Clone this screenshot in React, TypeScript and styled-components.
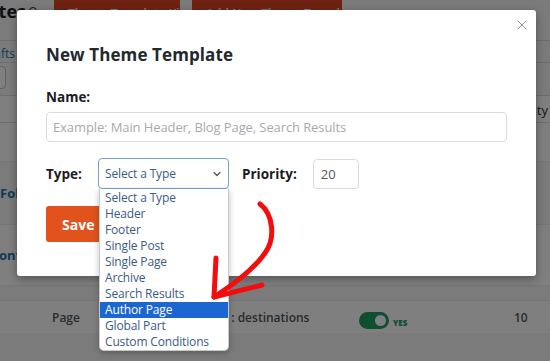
import React from "react";
import styled, { createGlobalStyle } from "styled-components";
import { X } from "lucide-react";

const GlobalStyle = createGlobalStyle`
  html, body { margin: 0; padding: 0; }
  body {
    width: 550px;
    height: 361px;
    overflow: hidden;
    background: #f6f7f7;
    font-family: "Open Sans", "Noto Sans", sans-serif;
  }
  * { box-sizing: border-box; }
`;

/* ---------- background admin page ---------- */

const Page = styled.div`
  position: relative;
  width: 550px;
  height: 361px;
  overflow: hidden;
  background: #f6f7f7;
  color: #1d2327;
`;

const TopBar = styled.div`
  display: flex;
  align-items: flex-start;
  height: 34px;
  margin-top: -12px;
`;

const TitleClip = styled.div`
  width: 26px;
  overflow: hidden;
  display: flex;
  justify-content: flex-end;
  white-space: nowrap;
  font-size: 18px;
  font-weight: 700;
  line-height: 24px;
  margin-top: 11px;
`;

const InfoDot = styled.span`
  width: 8px;
  height: 8px;
  border: 1.5px solid #1d2327;
  border-radius: 50%;
  margin: 19px 0 0 3px;
`;

const HeadButton = styled.div<{ $w: number; $ml: number }>`
  width: ${(p) => p.$w}px;
  margin-left: ${(p) => p.$ml}px;
  height: 34px;
  background: #dd4525;
  color: #fff;
  border-radius: 3px;
  font-size: 12px;
  font-weight: 600;
  display: flex;
  align-items: flex-start;
  padding: 17px 0 0 14px;
  white-space: nowrap;
`;

const FilterRow = styled.div`
  margin-top: 18px;
  height: 23px;
  border-top: 1px solid #dcdcde;
  border-bottom: 1px solid #dcdcde;
  display: flex;
  align-items: center;
  padding-top: 4px;
  font-size: 12px;
  color: #2271b1;
  white-space: nowrap;
`;

const ClipLink = styled.div`
  width: 15px;
  overflow: hidden;
  display: flex;
  justify-content: flex-end;
`;

const BulkRow = styled.div`
  height: 32px;
  display: flex;
  align-items: flex-start;
  padding-top: 3px;
`;

const BulkBox = styled.div`
  width: 40px;
  height: 23px;
  margin-left: -34px;
  border: 1px solid #c3c4c7;
  border-radius: 4px;
  background: #fff;
`;

const TableHead = styled.div`
  height: 28px;
  border-top: 1px solid #dcdcde;
  border-bottom: 1px solid #dcdcde;
  background: #fff;
  display: flex;
  align-items: center;
  justify-content: flex-end;
  padding: 2px 2px 0 0;
  font-size: 13px;
  color: #2c3338;
`;

const Row = styled.div<{ $h: number; $alt?: boolean }>`
  height: ${(p) => p.$h}px;
  background: ${(p) => (p.$alt ? "#f6f7f7" : "#fff")};
  border-bottom: 1px solid #eceef0;
  display: flex;
  align-items: center;
  font-size: 13px;
  font-weight: 700;
  color: #2271b1;
  white-space: nowrap;
`;

const ClipStart = styled.span`
  margin-left: -14px;
`;

const DataRow = styled.div`
  height: 32px;
  background: #fff;
  display: grid;
  grid-template-columns: 145px 162px 34px 121px 1fr;
  align-items: center;
  padding-left: 52px;
  font-size: 12px;
  font-weight: 600;
  color: #50575e;
  white-space: nowrap;
`;

const Toggle = styled.span`
  width: 30px;
  height: 17px;
  border-radius: 9px;
  background: #1f9d63;
  display: flex;
  align-items: center;
  justify-content: flex-end;
  padding-right: 3px;
  margin-top: 6px;
`;

const Knob = styled.span`
  width: 11px;
  height: 11px;
  border-radius: 50%;
  background: #fff;
`;

const YesText = styled.span`
  font-size: 8px;
  font-weight: 800;
  color: #1f9d63;
  margin-top: 10px;
`;

const Overlay = styled.div`
  position: absolute;
  inset: 0;
  background: rgba(0, 0, 0, 0.5);
`;

/* ---------- modal ---------- */

const Modal = styled.div`
  position: absolute;
  left: 17px;
  top: 10px;
  width: 519px;
  height: 266px;
  background: #fff;
  border-radius: 3px;
  box-shadow: 0 3px 10px rgba(0, 0, 0, 0.35);
  padding: 33px 29px 0;
  color: #1d2327;
`;

const CloseBtn = styled.div`
  position: absolute;
  top: 7px;
  right: 6px;
  color: #8c8f94;
  display: flex;
`;

const Title = styled.h2`
  margin: 0;
  font-size: 17px;
  font-weight: 700;
  line-height: 24px;
  color: #23282d;
  letter-spacing: 0.1px;
`;

const Label = styled.div`
  margin-top: 20px;
  font-size: 13.5px;
  font-weight: 700;
  line-height: 20px;
  color: #1e1a22;
`;

const TextInput = styled.div`
  margin-top: 5px;
  height: 30px;
  border: 1px solid #dcdcde;
  border-radius: 4px;
  padding-left: 6px;
  display: flex;
  align-items: center;
  font-size: 13px;
  letter-spacing: -0.1px;
  color: #a7aaad;
`;

const TypeRow = styled.div`
  margin-top: 16px;
  height: 31px;
  display: flex;
  align-items: center;
`;

const InlineLabel = styled.span<{ $w?: number; $ml?: number }>`
  font-size: 13.5px;
  font-weight: 700;
  color: #1e1a22;
  width: ${(p) => (p.$w ? `${p.$w}px` : "auto")};
  margin-left: ${(p) => p.$ml ?? 0}px;
`;

const SelectWrap = styled.div`
  position: relative;
  width: 131px;
  height: 31px;
`;

const SelectBox = styled.div`
  height: 31px;
  border: 1px solid #72a0d8;
  border-radius: 4px;
  display: flex;
  align-items: center;
  justify-content: space-between;
  padding: 0 7px 0 6px;
  font-size: 12px;
  letter-spacing: -0.15px;
  color: #3a5a88;
`;

const Menu = styled.div`
  position: absolute;
  top: 31px;
  left: 1px;
  width: 130px;
  padding-top: 1px;
  background: #fff;
  border: 1px solid #c8c8c8;
  border-top: none;
  border-radius: 0 0 5px 5px;
  box-shadow: 0 2px 6px rgba(0, 0, 0, 0.25);
  overflow: hidden;
  z-index: 2;
`;

const MenuItem = styled.div<{ $active?: boolean }>`
  height: 16px;
  line-height: 16px;
  padding-left: 5px;
  font-size: 12px;
  letter-spacing: -0.15px;
  white-space: nowrap;
  color: ${(p) => (p.$active ? "#fff" : "#3a5a88")};
  background: ${(p) => (p.$active ? "#1c66d1" : "transparent")};
`;

const SmallInput = styled.div`
  width: 46px;
  height: 30px;
  margin-left: 16px;
  border: 1px solid #dcdcde;
  border-radius: 4px;
  display: flex;
  align-items: center;
  padding-left: 7px;
  font-size: 13px;
  color: #50575e;
`;

const SaveButton = styled.div`
  margin-top: 17px;
  width: 80px;
  height: 36px;
  background: #e2521d;
  border-radius: 3px;
  color: #fff;
  font-size: 14px;
  font-weight: 700;
  display: flex;
  align-items: center;
  padding-left: 16px;
`;

const ArrowLayer = styled.svg`
  position: absolute;
  left: 0;
  top: 0;
  pointer-events: none;
  z-index: 5;
`;

const options = [
  "Select a Type",
  "Header",
  "Footer",
  "Single Post",
  "Single Page",
  "Archive",
  "Search Results",
  "Author Page",
  "Global Part",
  "Custom Conditions",
];

const Chevron = () => (
  <svg width="8" height="6" viewBox="0 0 8 6" fill="none">
    <path d="M1 1.5 L4 4.5 L7 1.5" stroke="#50575e" strokeWidth="1.3" strokeLinecap="round" strokeLinejoin="round" />
  </svg>
);

export default function App() {
  return (
    <>
      <GlobalStyle />
      <Page>
        <TopBar>
          <TitleClip>Theme Templates</TitleClip>
          <InfoDot />
          <HeadButton $w={126} $ml={17}>Theme Template Kit</HeadButton>
          <HeadButton $w={150} $ml={12}>Add New Theme Template</HeadButton>
        </TopBar>
        <FilterRow>
          <ClipLink>Drafts</ClipLink>
        </FilterRow>
        <BulkRow>
          <BulkBox />
        </BulkRow>
        <TableHead>Priority</TableHead>
        <Row $h={39} />
        <Row $h={63} $alt>Follow Us Footer</Row>
        <Row $h={61}>
          <ClipStart>Frontpage Header</ClipStart>
        </Row>
        <Row $h={15} $alt />
        <DataRow>
          <span>Page</span>
          <span>Posts : destinations</span>
          <Toggle>
            <Knob />
          </Toggle>
          <YesText>YES</YesText>
          <span>10</span>
        </DataRow>
        <Row $h={34} $alt />

        <Overlay />

        <Modal>
          <CloseBtn>
            <X size={16} strokeWidth={1.4} />
          </CloseBtn>
          <Title>New Theme Template</Title>
          <Label>Name:</Label>
          <TextInput>Example: Main Header, Blog Page, Search Results</TextInput>
          <TypeRow>
            <InlineLabel $w={52}>Type:</InlineLabel>
            <SelectWrap>
              <SelectBox>
                <span>Select a Type</span>
                <Chevron />
              </SelectBox>
              <Menu>
                {options.map((o) => (
                  <MenuItem key={o} $active={o === "Author Page"}>
                    {o}
                  </MenuItem>
                ))}
              </Menu>
            </SelectWrap>
            <InlineLabel $ml={13}>Priority:</InlineLabel>
            <SmallInput>20</SmallInput>
          </TypeRow>
          <SaveButton>Save</SaveButton>
        </Modal>

        <ArrowLayer width="550" height="361" viewBox="0 0 550 361">
          <g fill="none" stroke="#f40d0d" strokeWidth="5" strokeLinecap="round" strokeLinejoin="round">
            <path d="M260 204 C 273 214, 276 238, 265 253 C 254 269, 236 283, 214 297" />
            <path d="M216 258 L 214 297 L 262 285" />
          </g>
        </ArrowLayer>
      </Page>
    </>
  );
}
